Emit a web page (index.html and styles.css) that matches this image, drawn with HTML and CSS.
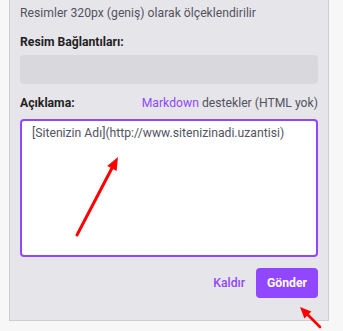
FILE: index.html
```html
<!doctype html>
<html lang="tr">
    <head>
        <meta charset="utf-8">
        <title>Resim Paneli</title>
        <meta name="viewport" content="width=device-width, initial-scale=1">
        <link rel="stylesheet" href="styles.css">
    </head>
    <body>
        <div class="panel">
            <p class="note">Resimler 320px (geniş) olarak ölçeklendirilir</p>

            <div class="label">Resim Bağlantıları:</div>
            <div class="field"></div>

            <div class="label-row">
                <span class="label">Açıklama:</span>
                <span class="hint"><a href="#">Markdown</a> destekler (HTML yok)</span>
            </div>
            <textarea class="desc">[Sitenizin Adı](http://www.sitenizinadi.uzantisi)</textarea>

            <div class="actions">
                <a href="#" class="link">Kaldır</a>
                <button class="btn">Gönder</button>
            </div>
        </div>

        <!-- red annotation arrows on top of the screenshot -->
        <svg class="marks" width="343" height="331" viewBox="0 0 343 331">
            <line x1="77" y1="235" x2="112" y2="168" stroke="#f00" stroke-width="3" stroke-linecap="round" />
            <polygon points="118,157 116.6,171 107.2,166" fill="#f00" />
            <line x1="320" y1="327" x2="307" y2="314" stroke="#f00" stroke-width="2.6" stroke-linecap="round" />
            <polygon points="300,307 311.4,311.4 304.4,318.4" fill="#f00" />
        </svg>
    </body>
</html>
```

FILE: styles.css
```css
/* common */
html, body { font-family: Roboto, "Noto Sans", sans-serif; }
body { margin: 0; background: #f7f7f8; width: 343px; height: 331px; overflow: hidden; position: relative; }
a { text-decoration: none; color: #9147ff; }

.panel {
    margin-left: 9px;
    width: 320px;
    box-sizing: border-box;
    padding: 4px 10px 22px 10px;
    background: #e6e5ea;
    border: 1px solid #cfced3;
    border-top: none;
}
.note { margin: 0; font-size: 12.2px; line-height: 18px; color: #53535f; }
.label { font-size: 12.2px; line-height: 18px; font-weight: 700; color: #1f1f23; }
.panel > .label { margin-top: 11px; }
.field { margin-top: 4px; height: 29px; border-radius: 4px; background: #d9d8dd; }

.label-row { display: flex; justify-content: space-between; margin-top: 10px; }
.hint { font-size: 12.2px; line-height: 18px; color: #53535f; }

.desc {
    display: block;
    margin-top: 7px;
    width: 100%;
    height: 138px;
    box-sizing: border-box;
    padding: 3px 10px;
    border: 2px solid #9147ff;
    border-radius: 4px;
    background: #fff;
    font-family: Roboto, "Noto Sans", sans-serif;
    font-size: 12.2px;
    line-height: 18px;
    color: #53535f;
    resize: none;
    outline: none;
}

.actions { display: flex; justify-content: flex-end; align-items: center; gap: 11px; margin-top: 11px; }
.link { font-size: 12.2px; font-weight: 500; }
.btn {
    height: 30px;
    width: 62px;
    padding: 0;
    border: none;
    border-radius: 4px;
    background: #9147ff;
    color: #fff;
    font-family: Roboto, "Noto Sans", sans-serif;
    font-size: 12.2px;
    font-weight: 700;
}

.marks { position: absolute; left: 0; top: 0; pointer-events: none; }
```
